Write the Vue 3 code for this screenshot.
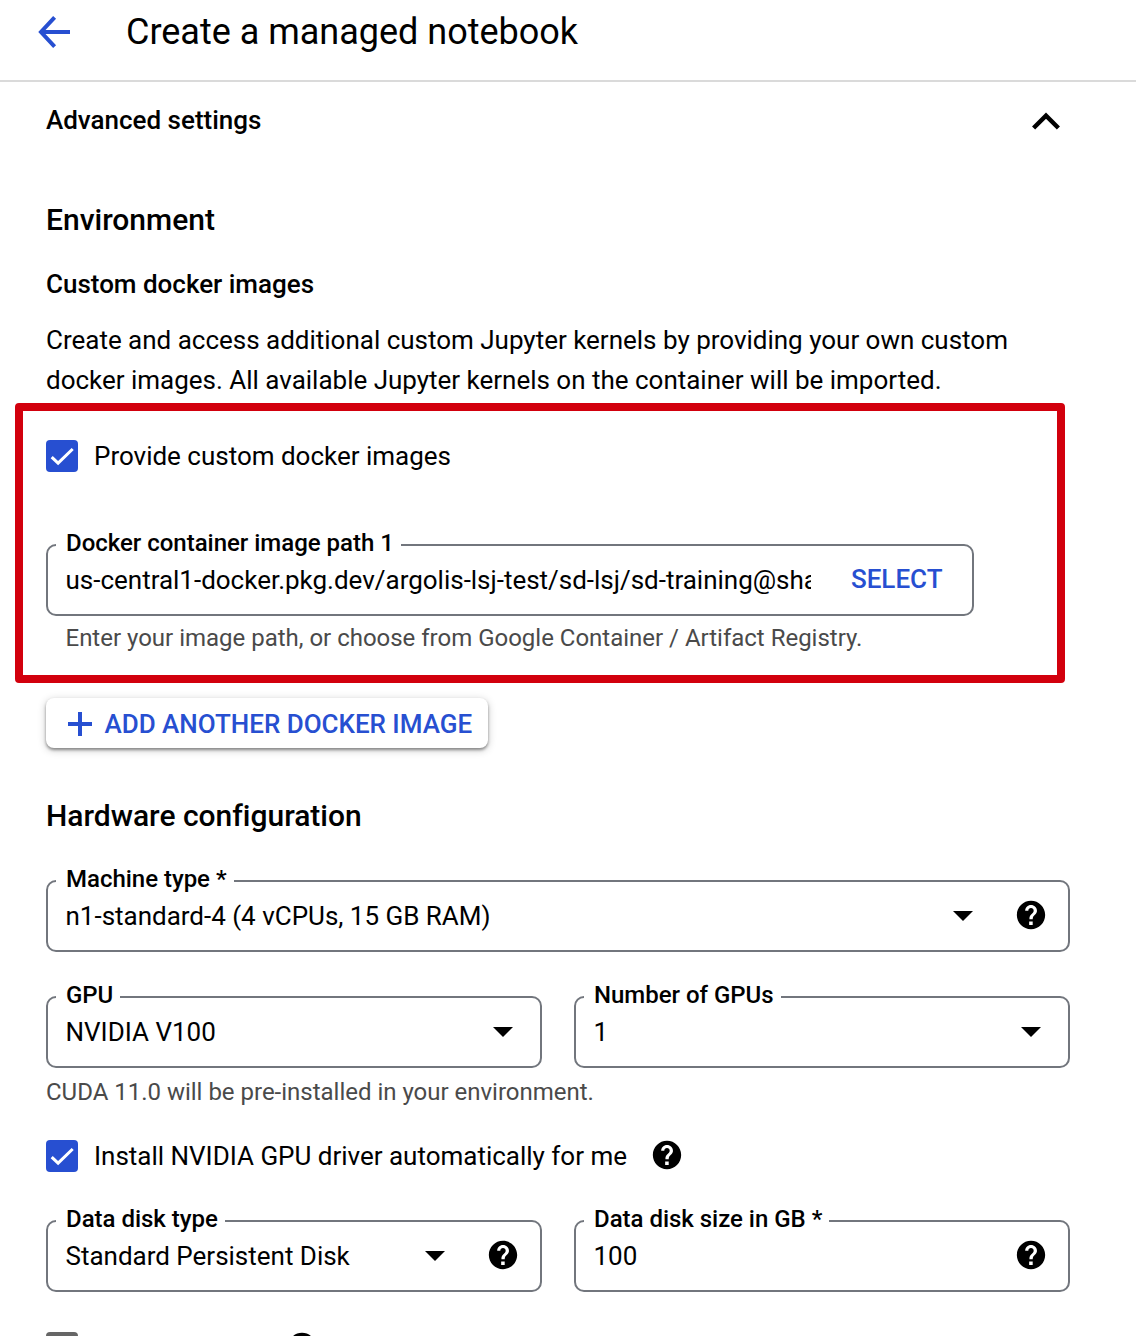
<script setup>
import { h } from 'vue'

const HelpIcon = () =>
  h('svg', { width: 34, height: 34, viewBox: '0 0 24 24', style: 'display:block;flex:none' }, [
    h('path', {
      fill: '#000',
      d: 'M12 2C6.48 2 2 6.48 2 12s4.48 10 10 10 10-4.48 10-10S17.52 2 12 2zm1.2 17h-2.5v-2.5h2.5V19zm2.1-7.75l-.9.92c-.72.73-1.2 1.33-1.2 2.83h-2.3v-.5c0-1.1.48-2.1 1.2-2.83l1.24-1.26c.37-.36.56-.86.56-1.41 0-1.1-.8-1.9-1.9-1.9s-1.9.8-1.9 1.9H7.9c0-2.21 1.79-4 4.1-4s4.2 1.79 4.2 4c0 .88-.36 1.68-.9 2.25z'
    })
  ])

const CheckMark = () =>
  h('svg', { width: 32, height: 32, viewBox: '0 0 32 32', style: 'display:block' }, [
    h('path', { d: 'M5.7 17.2l6.4 6L26.7 9', fill: 'none', stroke: '#fff', 'stroke-width': 3 })
  ])

const Caret = () =>
  h('svg', { width: 20, height: 12, viewBox: '0 0 20 12', style: 'display:block;flex:none' }, [
    h('path', { d: 'M0 2h20L10 12z', fill: '#000' })
  ])
</script>

<template>
  <div class="page">
    <header class="top">
      <svg class="back" width="32" height="34" viewBox="0 0 32 34">
        <path d="M16.6 2.4L3 17l13.6 14.6M2.5 17H32" fill="none" stroke="#274fd1" stroke-width="4" />
      </svg>
      <h1>Create a managed notebook</h1>
    </header>

    <main>
      <div class="advanced">
        <span>Advanced settings</span>
        <svg width="30" height="20" viewBox="0 0 30 20">
          <path d="M2.6 17L15 4.6 27.4 17" fill="none" stroke="#000" stroke-width="4.4" />
        </svg>
      </div>

      <h2 class="env">Environment</h2>
      <h3>Custom docker images</h3>
      <p class="intro">Create and access additional custom Jupyter kernels by providing your own custom<br>docker images. All available Jupyter kernels on the container will be imported.</p>

      <section class="docker">
        <div class="highlight"></div>
        <div class="check">
          <span class="box"><CheckMark /></span>
          <span>Provide custom docker images</span>
        </div>
        <div class="field path">
          <label>Docker container image path 1</label>
          <span class="value clipped">us-central1-docker.pkg.dev/argolis-lsj-test/sd-lsj/sd-training@sha</span>
          <span class="select">SELECT</span>
        </div>
        <div class="hint inset">Enter your image path, or choose from Google Container / Artifact Registry.</div>
      </section>

      <button class="add">
        <svg width="24" height="24" viewBox="0 0 24 24">
          <path d="M12 0v24M0 12h24" stroke="#274fd1" stroke-width="4" />
        </svg>
        <span>ADD ANOTHER DOCKER IMAGE</span>
      </button>

      <h2 class="hardware">Hardware configuration</h2>

      <div class="field">
        <label>Machine type *</label>
        <span class="value">n1-standard-4 (4 vCPUs, 15 GB RAM)</span>
        <Caret /><HelpIcon />
      </div>

      <div class="row gpu">
        <div class="field solo">
          <label>GPU</label>
          <span class="value">NVIDIA V100</span>
          <Caret />
        </div>
        <div class="field solo">
          <label>Number of GPUs</label>
          <span class="value">1</span>
          <Caret />
        </div>
      </div>
      <div class="hint">CUDA 11.0 will be pre-installed in your environment.</div>

      <div class="check driver">
        <span class="box"><CheckMark /></span>
        <span class="drivertext">Install NVIDIA GPU driver automatically for me</span>
        <HelpIcon class="driverhelp" />
      </div>

      <div class="row disk">
        <div class="field">
          <label>Data disk type</label>
          <span class="value">Standard Persistent Disk</span>
          <Caret /><HelpIcon />
        </div>
        <div class="field">
          <label>Data disk size in GB *</label>
          <span class="value">100</span>
          <HelpIcon />
        </div>
      </div>

      <div class="next">
        <span class="box off"></span>
        <HelpIcon />
      </div>
    </main>
  </div>
</template>

<style>
body { margin: 0; background: #fff; }
</style>

<style scoped>
.page {
  width: 1136px;
  height: 1336px;
  overflow: hidden;
  background: #fff;
  color: #000;
  font-family: Roboto, "Liberation Sans", sans-serif;
  font-size: 26px;
  letter-spacing: -0.01px;
}
.top {
  box-sizing: border-box;
  height: 82px;
  padding: 0 0 16px 38px;
  border-bottom: 2px solid #dadada;
  display: flex;
  align-items: center;
}
.back { margin-right: 56px; }
h1, h2, h3, p { margin: 0; font-weight: 500; }
h1 { font-size: 36px; font-weight: 400; line-height: 48px; }
h2 { font-size: 30px; line-height: 40px; }
h3 { font-size: 26px; line-height: 40px; }
main { padding: 0 66px 0 46px; }
.advanced {
  height: 78px;
  display: flex;
  align-items: center;
  justify-content: space-between;
  padding-right: 9px;
  font-weight: 500;
}
.advanced span { padding-bottom: 2px; }
.env { margin-top: 40px; }
.env + h3 { margin-top: 24px; }
.intro { margin-top: 16px; font-weight: 400; line-height: 40px; white-space: nowrap; }
.docker { position: relative; padding-top: 40px; }
.highlight {
  position: absolute;
  left: -31px;
  top: 2.5px;
  width: 1034px;
  height: 264px;
  border: 8px solid #d2000d;
  border-radius: 4px;
}
.check { display: flex; align-items: center; height: 32px; line-height: 32px; }
.box {
  flex: none;
  width: 32px;
  height: 32px;
  margin-right: 16px;
  border-radius: 4px;
  background: #274fd1;
}
.field {
  position: relative;
  box-sizing: border-box;
  height: 72px;
  border: 2px solid #72767d;
  border-radius: 10px;
  display: flex;
  align-items: center;
  padding: 0 20px 2px 17.5px;
  gap: 41px;
}
.field.solo { padding-right: 27px; }
.field label {
  position: absolute;
  left: 8px;
  top: -18px;
  padding: 0 7px 0 10px;
  background: #fff;
  font-size: 24px;
  font-weight: 500;
  line-height: 30px;
  letter-spacing: -0.02px;
  white-space: nowrap;
}
.value { flex: 1; line-height: 36px; padding-top: 2px; white-space: nowrap; }
.path { width: 928px; margin-top: 72px; padding-right: 29.5px; gap: 40px; }
.clipped { overflow: hidden; min-width: 0; }
.select { color: #274fd1; font-weight: 500; }
.hint { color: #4a4a4a; font-size: 24px; line-height: 32px; margin-top: 8px; }
.hint.inset { margin: 6px 0 0 19.5px; }
.add {
  width: 442px;
  height: 50px;
  margin: 44px 0 0;
  padding: 2px 0 0 22px;
  display: flex;
  align-items: center;
  gap: 12.5px;
  border: 0;
  border-radius: 8px;
  background: #fff;
  box-shadow: 0 2px 3px rgba(0, 0, 0, .38), 0 2px 8px rgba(0, 0, 0, .22);
  color: #274fd1;
  font: 500 26px/48px Roboto, "Liberation Sans", sans-serif;
  letter-spacing: -0.02px;
  white-space: nowrap;
}
.hardware { margin: 48px 0 44px; }
.row { display: grid; grid-template-columns: 496px 496px; gap: 32px; }
.gpu { margin-top: 44px; }
.driver { margin-top: 32px; }
.drivertext { margin-right: 23.5px; }
.driverhelp { margin-bottom: 2px; }
.disk { margin-top: 48px; }
.next { display: flex; align-items: flex-start; margin-top: 38px; gap: 191px; }
.box.off { background: #666; margin-top: 2px; }
</style>
